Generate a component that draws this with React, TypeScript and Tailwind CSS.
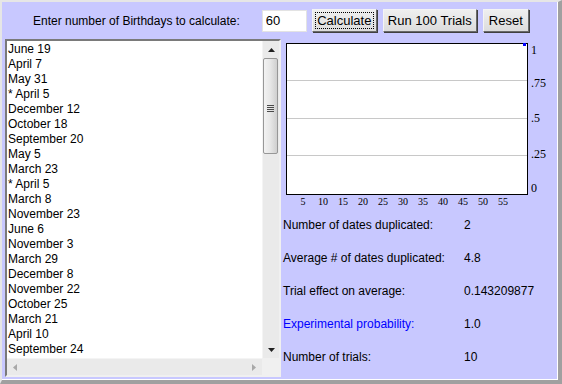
import React from "react";

const dates = [
  "June 19",
  "April 7",
  "May 31",
  "* April 5",
  "December 12",
  "October 18",
  "September 20",
  "May 5",
  "March 23",
  "* April 5",
  "March 8",
  "November 23",
  "June 6",
  "November 3",
  "March 29",
  "December 8",
  "November 22",
  "October 25",
  "March 21",
  "April 10",
  "September 24",
];

const stats: { label: string; value: string; blue?: boolean }[] = [
  { label: "Number of dates duplicated:", value: "2" },
  { label: "Average # of dates duplicated:", value: "4.8" },
  { label: "Trial effect on average:", value: "0.143209877" },
  { label: "Experimental probability:", value: "1.0", blue: true },
  { label: "Number of trials:", value: "10" },
];

function Btn({ children, focus, w }: { children: React.ReactNode; focus?: boolean; w: string }) {
  return (
    <div
      className={`${w} relative h-[23px] flex items-center justify-center border border-t-[#f4f4f4] border-l-[#f4f4f4] border-r-[#6a6a6a] border-b-[#6a6a6a] bg-gradient-to-b from-[#efefef] to-[#dcdcdc] shadow-[1px_1px_0_#404040] text-[13px] text-black`}
    >
      {focus && <div className="absolute inset-[2px] border border-dotted border-black" />}
      <span className="leading-[15px]">{children}</span>
    </div>
  );
}

function Chart() {
  const xs = [5, 10, 15, 20, 25, 30, 35, 40, 45, 50, 55];
  const ys = [
    { t: "1", y: 11 },
    { t: ".75", y: 44 },
    { t: ".5", y: 79 },
    { t: ".25", y: 115 },
    { t: "0", y: 149 },
  ];
  return (
    <svg width={275} height={165} className="block">
      <rect x={5.5} y={0.5} width={241} height={151} fill="#ffffff" stroke="#000000" />
      {[37.5, 75.5, 112.5].map((y) => (
        <line key={y} x1={6} x2={246} y1={y} y2={y} stroke="#c8c8c8" />
      ))}
      <rect x={242} y={0} width={3} height={3} fill="#0000ff" />
      {ys.map((l) => (
        <text
          key={l.t}
          x={250}
          y={l.y}
          fontFamily="'Liberation Serif', serif"
          fontSize={12}
          fill="#000"
        >
          {l.t}
        </text>
      ))}
      {xs.map((n) => (
        <text
          key={n}
          x={6 + (n - 1) * 4}
          y={162}
          textAnchor="middle"
          fontFamily="'Liberation Serif', serif"
          fontSize={10}
          fill="#000"
        >
          {n}
        </text>
      ))}
    </svg>
  );
}

export default function App() {
  return (
    <div
      className="w-[562px] h-[384px] border-t-2 border-l-2 border-r-4 border-b-4 border-t-[#e6e6e6] border-l-[#e6e6e6] border-r-[#a0a0a0] border-b-[#a0a0a0] bg-[#a0a0a0]"
      style={{ fontFamily: "'Liberation Sans', Arial, sans-serif" }}
    >
      <div className="w-full h-full border-r border-b border-white bg-[#c8c8ff] flex flex-col">
        {/* header */}
        <div className="h-[37px] flex items-center pl-[31px] text-[12px] text-black shrink-0">
          <span>Enter number of Birthdays to calculate:</span>
          <div className="ml-[22px] w-[45px] h-[22px] bg-white border border-[#e3e3e3] flex items-center pl-[3px] text-[13px]">
            60
          </div>
          <div className="ml-[5px] flex gap-[6px]">
            <Btn w="w-[65px]" focus>
              Calculate
            </Btn>
            <Btn w="w-[94px]">Run 100 Trials</Btn>
            <Btn w="w-[46px]">Reset</Btn>
          </div>
        </div>
        {/* body */}
        <div className="flex flex-1 min-h-0 pl-[3px]">
          {/* list */}
          <div className="w-[276px] h-[338px] border-2 border-t-[#7a7a7a] border-l-[#7a7a7a] border-r-[#f0f0f0] border-b-[#f0f0f0] bg-white flex flex-col">
            <div className="flex flex-1 min-h-0">
              <div className="flex-1 overflow-hidden pl-[1px] pt-[1px] text-[12px] text-black leading-[15px]">
                {dates.map((d, i) => (
                  <div key={i} className="h-[15px] whitespace-nowrap">
                    {d}
                  </div>
                ))}
              </div>
              {/* vertical scrollbar */}
              <div className="w-[17px] bg-[#eaeaea] border-l border-[#f4f4f4] flex flex-col items-center">
                <div className="h-[17px] w-full flex items-center justify-center">
                  <svg width="7" height="4">
                    <path d="M0 4 L3.5 0 L7 4 Z" fill="#202020" />
                  </svg>
                </div>
                <div className="ml-[-1px] w-[15px] h-[96px] rounded-[2px] border border-[#979797] bg-gradient-to-r from-[#f2f2f2] via-[#e6e6e6] to-[#cfcfcf] flex items-center justify-center">
                  <div className="flex flex-col gap-[1px] mt-[4px]">
                    <div className="w-[7px] h-[1px] bg-[#4a4a4a]" />
                    <div className="w-[7px] h-[1px] bg-[#4a4a4a]" />
                    <div className="w-[7px] h-[1px] bg-[#4a4a4a]" />
                    <div className="w-[7px] h-[1px] bg-[#4a4a4a]" />
                  </div>
                </div>
                <div className="flex-1" />
                <div className="h-[17px] w-full flex items-center justify-center">
                  <svg width="7" height="4">
                    <path d="M0 0 L3.5 4 L7 0 Z" fill="#202020" />
                  </svg>
                </div>
              </div>
            </div>
            {/* horizontal scrollbar */}
            <div className="h-[17px] flex shrink-0">
              <div className="flex-1 bg-[#eaeaea] border-t border-[#f4f4f4] flex items-center justify-between px-[6px]">
                <svg width="4" height="7">
                  <path d="M4 0 L0 3.5 L4 7 Z" fill="#a8a8a8" />
                </svg>
                <svg width="4" height="7">
                  <path d="M0 0 L4 3.5 L0 7 Z" fill="#a8a8a8" />
                </svg>
              </div>
              <div className="w-[17px] bg-[#f0f0f0]" />
            </div>
          </div>
          {/* right panel */}
          <div className="flex-1 flex flex-col pt-[4px]">
            <Chart />
            <div className="text-[12px] text-black">
              {stats.map((s) => (
                <div key={s.label} className="h-[33px] flex items-center pl-[2px]">
                  <span className={`w-[181px] ${s.blue ? "text-[#0000ff]" : ""}`}>{s.label}</span>
                  <span>{s.value}</span>
                </div>
              ))}
            </div>
          </div>
        </div>
      </div>
    </div>
  );
}
